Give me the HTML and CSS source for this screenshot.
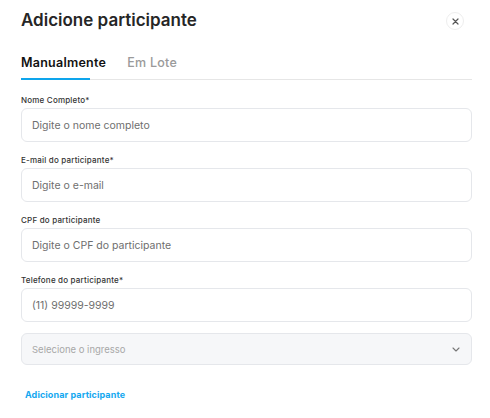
FILE: index.html
```html
<!DOCTYPE html>
<html lang="pt-BR">
<head>
<meta charset="utf-8">
<title>Adicione participante</title>
<link rel="stylesheet" href="styles.css">
</head>
<body>
<div class="modal">
  <div class="header">
    <h1 class="title">Adicione participante</h1>
    <button class="close" aria-label="Fechar">
      <svg width="7" height="7" viewBox="0 0 7 7"><path d="M1 1L6 6M6 1L1 6" stroke="#555" stroke-width="1.2" stroke-linecap="round"/></svg>
    </button>
  </div>
  <div class="tabs">
    <div class="tab active">Manualmente</div>
    <div class="tab">Em Lote</div>
  </div>
  <form class="form">
    <div class="field">
      <label class="label">Nome Completo*</label>
      <div class="input">Digite o nome completo</div>
    </div>
    <div class="field">
      <label class="label">E-mail do participante*</label>
      <div class="input">Digite o e-mail</div>
    </div>
    <div class="field">
      <label class="label">CPF do participante</label>
      <div class="input">Digite o CPF do participante</div>
    </div>
    <div class="field">
      <label class="label">Telefone do participante*</label>
      <div class="input">(11) 99999-9999</div>
    </div>
    <div class="select">
      <span>Selecione o ingresso</span>
      <svg width="8" height="5" viewBox="0 0 8 5"><path d="M1 1L4 4L7 1" fill="none" stroke="#777" stroke-width="1.1" stroke-linecap="round" stroke-linejoin="round"/></svg>
    </div>
    <a class="add" href="#">Adicionar participante</a>
  </form>
</div>
</body>
</html>
```
FILE: styles.css
```css
* { box-sizing: border-box; }
body {
  margin: 0;
  background: #fff;
  font-family: "Inter", "Noto Sans", sans-serif;
  color: #222;
}
.modal {
  padding: 9px 18px 0 21px;
}
.header {
  display: flex;
  align-items: center;
  justify-content: space-between;
}
.title {
  margin: 0;
  font-size: 17px;
  font-weight: 600;
  color: #262626;
  line-height: 22px;
}
.close {
  width: 18px;
  height: 18px;
  border-radius: 50%;
  border: 1px solid #eeeeee;
  background: #fff;
  padding: 0;
  display: flex;
  align-items: center;
  justify-content: center;
  margin-right: 8px;
  margin-top: 2px;
}
.tabs {
  display: flex;
  gap: 21px;
  margin-top: 20px;
  border-bottom: 1px solid #e6e6e6;
}
.tab {
  position: relative;
  font-size: 12.5px;
  font-weight: 500;
  color: #9a9a9a;
  padding: 4px 0 8px;
  line-height: 16px;
  letter-spacing: 0.25px;
}
.tab.active {
  color: #111;
  font-weight: 600;
}
.tab.active::after {
  content: "";
  position: absolute;
  left: 0;
  bottom: -1px;
  width: 69px;
  height: 2px;
  background: #0ea5ec;
}
.form {
  display: flex;
  flex-direction: column;
  padding-top: 15px;
}
.field {
  display: flex;
  flex-direction: column;
  gap: 3px;
  margin-bottom: 13px;
}
.label {
  font-size: 8px;
  font-weight: 500;
  color: #333;
  line-height: 10px;
  letter-spacing: 0.2px;
}
.input {
  height: 34px;
  border: 1px solid #e5e7eb;
  border-radius: 6px;
  padding: 0 10px;
  display: flex;
  align-items: center;
  font-size: 10.5px;
  color: #6e6e6e;
}
.select {
  margin-top: -2px;
  height: 32px;
  border: 1px solid #e5e7eb;
  border-radius: 6px;
  background: #f6f7f9;
  padding: 0 11px 0 10px;
  display: flex;
  align-items: center;
  justify-content: space-between;
  font-size: 9.5px;
  color: #a8a8a8;
}
.add {
  margin-top: 24px;
  margin-left: 4px;
  font-size: 9px;
  font-weight: 700;
  color: #14a8f0;
  text-decoration: none;
  letter-spacing: 0.1px;
}
```
